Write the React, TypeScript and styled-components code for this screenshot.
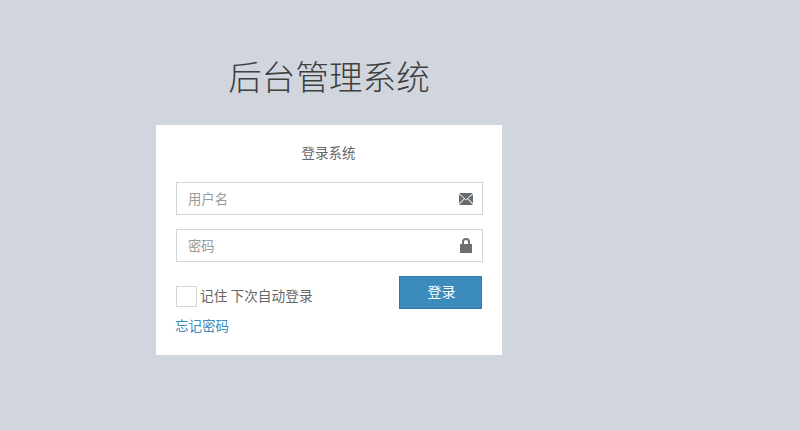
import React from "react";
import styled, { createGlobalStyle } from "styled-components";

const Global = createGlobalStyle`
  html, body { margin: 0; padding: 0; height: 100%; }
  body { background: #d1d5de; font-family: "Noto Sans CJK SC", "Liberation Sans", sans-serif; overflow: hidden; }
  input::placeholder { color: #999; opacity: 1; }
`;

const Page = styled.div`
  width: 800px;
  height: 430px;
  display: flex;
  flex-direction: column;
  padding: 52px 0 0 156px;
  box-sizing: border-box;
`;

const Logo = styled.h1`
  width: 346px;
  margin: 0 0 25px;
  height: 48px;
  line-height: 48px;
  text-align: center;
  font-size: 33.6px;
  font-weight: 300;
  color: #3f3f3f;
`;

const Card = styled.form`
  width: 346px;
  height: 230px;
  box-sizing: border-box;
  background: #fff;
  padding: 17px 19px 0 20px;
  display: flex;
  flex-direction: column;
`;

const Heading = styled.h3`
  margin: 0 0 19px;
  padding-right: 2px;
  height: 21px;
  line-height: 21px;
  text-align: center;
  font-size: 13.5px;
  font-weight: 400;
  color: #666;
`;

const Field = styled.div`
  height: 33px;
  box-sizing: border-box;
  border: 1px solid #d1d5de;
  display: flex;
  align-items: center;
  padding: 0 9px 0 11px;
  margin-bottom: 14px;
`;

const Input = styled.input`
  flex: 1;
  min-width: 0;
  border: 0;
  outline: 0;
  padding: 0;
  background: transparent;
  font: 400 13.33px "Noto Sans CJK SC", sans-serif;
  color: #555;
`;

const Actions = styled.div`
  display: flex;
  justify-content: space-between;
  align-items: flex-start;
  padding-right: 1px;
`;

const Remember = styled.label`
  display: flex;
  align-items: flex-start;
  gap: 3px;
  margin-top: 10px;
  font-size: 13.7px;
  line-height: 19px;
  color: #666;
`;

const Box = styled.span`
  width: 21px;
  height: 21px;
  box-sizing: border-box;
  border: 1px solid #d8d3cf;
  background: #fff;
`;

const Submit = styled.button`
  width: 83px;
  height: 33px;
  border: 1px solid #2f7ba8;
  background: #3b8cbd;
  color: #fff;
  font: 400 14px "Noto Sans CJK SC", sans-serif;
  padding: 0 0 3px 2px;
`;

const Forgot = styled.a`
  align-self: flex-start;
  margin-top: 6px;
  margin-left: -1px;
  font-size: 13.5px;
  line-height: 20px;
  color: #3b8cbd;
`;

const LockIcon = styled.svg`
  margin-right: 1px;
`;

const Mail = () => (
  <svg width="14" height="12" viewBox="0 0 14 12" fill="#666b70">
    <path d="M0 0h14L7 6.6z" />
    <path d="M0 1.2V10.6l5-5z" />
    <path d="M14 1.2V10.6L9 5.6z" />
    <path d="M5.6 6L7 7.2 8.4 6 14 12H0z" />
  </svg>
);

const Lock = () => (
  <LockIcon width="12" height="15" viewBox="0 0 12 15">
    <path d="M3 7V3.8a3 2.8 0 0 1 6 0V7" fill="none" stroke="#6e6e6e" strokeWidth="2" />
    <rect x="0" y="6" width="12" height="9" fill="#6e6e6e" />
  </LockIcon>
);

export default function App() {
  return (
    <>
      <Global />
      <Page>
        <Logo>后台管理系统</Logo>
        <Card>
          <Heading>登录系统</Heading>
          <Field>
            <Input placeholder="用户名" />
            <Mail />
          </Field>
          <Field>
            <Input placeholder="密码" />
            <Lock />
          </Field>
          <Actions>
            <Remember>
              <Box />
              记住 下次自动登录
            </Remember>
            <Submit type="button">登录</Submit>
          </Actions>
          <Forgot>忘记密码</Forgot>
        </Card>
      </Page>
    </>
  );
}
